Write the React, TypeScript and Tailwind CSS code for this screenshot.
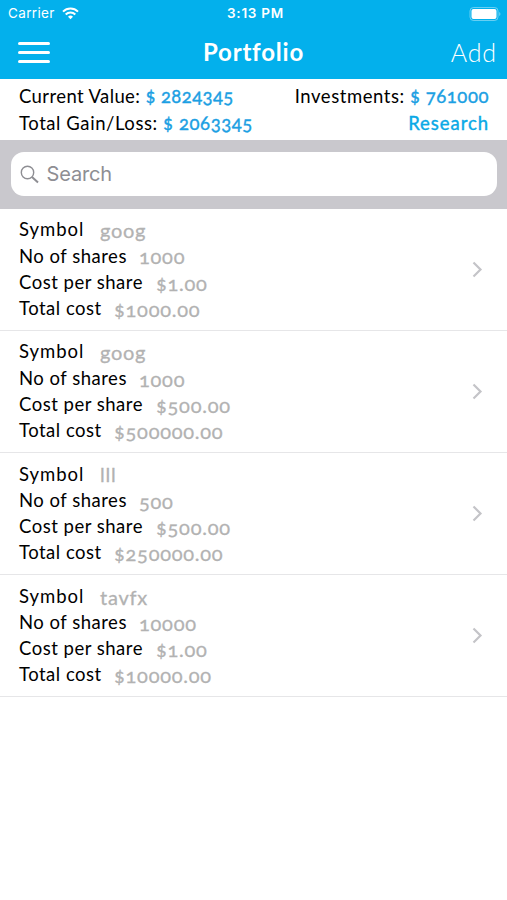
const HOLDINGS = [
  { id: 1, symbol: 'goog', shares: '1000', cost: '$1.00', total: '$1000.00' },
  { id: 2, symbol: 'goog', shares: '1000', cost: '$500.00', total: '$500000.00' },
  { id: 3, symbol: 'lll', shares: '500', cost: '$500.00', total: '$250000.00' },
  { id: 4, symbol: 'tavfx', shares: '10000', cost: '$1.00', total: '$10000.00' },
]

function StatusBar() {
  return (
    <div className="h-[27px] flex items-center pl-2 pr-[6px] text-white font-['Inter',sans-serif] text-[13.5px]">
      <div className="w-[219px] flex items-center gap-[7px]">
        <span className="tracking-[0.35px]">Carrier</span>
        <svg width="17" height="13" viewBox="0 0 17 13" fill="none" stroke="white" strokeWidth="2">
          <path d="M1 4.6a10.6 10.6 0 0 1 15 0" />
          <path d="M3.7 7.5a6.8 6.8 0 0 1 9.6 0" />
          <path d="M8.5 12.2 6 9.7a3.6 3.6 0 0 1 5 0z" fill="white" stroke="none" />
        </svg>
      </div>
      <span className="font-semibold tracking-[0.75px]">3:13 PM</span>
      <svg className="ml-auto" width="32" height="14" viewBox="0 0 32 14">
        <rect x="1" y="0.5" width="28" height="13" rx="3.5" fill="none" stroke="white" strokeOpacity="0.4" />
        <rect x="2.5" y="2" width="25" height="10" rx="2" fill="white" />
        <path d="M30.3 5v4a2.4 2.4 0 0 0 0-4z" fill="white" fillOpacity="0.5" />
      </svg>
    </div>
  )
}

function Chevron() {
  return (
    <svg width="11" height="17" viewBox="0 0 11 17" fill="none" stroke="#c4c4c8" strokeWidth="2.2">
      <path d="m1.5 1.5 7 7-7 7" />
    </svg>
  )
}

function Amount({ children }: { children: string }) {
  return (
    <span className="text-[#1c9fe3] oldstyle-nums [-webkit-text-stroke:0.4px_#1c9fe3]">{children}</span>
  )
}

function Field({ label, value, labelClass }: { label: string; value: string; labelClass: string }) {
  return (
    <div className="h-[26.2px] flex items-center">
      <span className={`text-black shrink-0 ${labelClass}`}>{label}</span>
      <span className="text-[#b2b2b2] text-[20px] tracking-[0.75px] oldstyle-nums [-webkit-text-stroke:0.3px_#b2b2b2]">
        {value}
      </span>
    </div>
  )
}

export default function App() {
  return (
    <div className="min-h-screen bg-white font-['Lato',sans-serif] text-[18.5px]">
      {/* Header */}
      <header className="h-[79px] bg-[#03b0ec] text-white">
        <StatusBar />
        <div className="h-[51px] grid grid-cols-3 items-center">
          <div className="ml-[18px] w-8 flex flex-col gap-[6px]">
            <span className="h-[3px] rounded-full bg-white" />
            <span className="h-[3px] rounded-full bg-white" />
            <span className="h-[3px] rounded-full bg-white" />
          </div>
          <h1 className="text-center text-[24px] leading-8 font-bold tracking-[0.8px] pb-px">Portfolio</h1>
          <div className="pr-[10px] text-right text-[25px] leading-8 font-light tracking-[0.9px] pb-px">Add</div>
        </div>
      </header>

      {/* Totals */}
      <div className="h-[61px] pl-[19px] pr-[18px] pt-[4px] flex justify-between leading-[27px]">
        <div>
          <p className="tracking-[0.4px]">
            Current Value: <Amount>$ 2824345</Amount>
          </p>
          <p className="tracking-[0.57px]">
            Total Gain/Loss: <Amount>$ 2063345</Amount>
          </p>
        </div>
        <div className="text-right">
          <p className="tracking-[0.55px]">
            Investments: <Amount>$ 761000</Amount>
          </p>
          <p className="text-[#0aa9e6] tracking-[0.95px] [-webkit-text-stroke:0.4px_#0aa9e6]">Research</p>
        </div>
      </div>

      {/* Search */}
      <div className="h-[68.5px] bg-[#c9c8cd] px-[10.5px] pt-[12px]">
        <div className="h-11 bg-white rounded-[13px] flex items-center pl-[9px] gap-[8px] text-[#8e8e93]">
          <svg width="19" height="19" viewBox="0 0 19 19" fill="none" stroke="#8e8e93" strokeWidth="1.4">
            <circle cx="7.5" cy="7.5" r="6.2" />
            <path d="m12 12 6 5.5" strokeWidth="2" />
          </svg>
          <span className="font-['Inter',sans-serif] text-[20px] leading-none pb-px tracking-[-0.15px]">Search</span>
        </div>
      </div>

      {/* Holdings */}
      {HOLDINGS.map(h => (
        <div key={h.id} className="h-[122.1px] border-b border-[#e6e6e8] pl-[19px] pr-[24px] flex items-center justify-between">
          <div className="pt-px">
            <Field label="Symbol" value={h.symbol} labelClass="w-[81px] tracking-[0.95px]" />
            <Field label="No of shares" value={h.shares} labelClass="w-[120px] tracking-[0.5px]" />
            <Field label="Cost per share" value={h.cost} labelClass="w-[137px] tracking-[0.5px]" />
            <Field label="Total cost" value={h.total} labelClass="w-[95px] tracking-[0.5px]" />
          </div>
          <Chevron />
        </div>
      ))}
    </div>
  )
}
